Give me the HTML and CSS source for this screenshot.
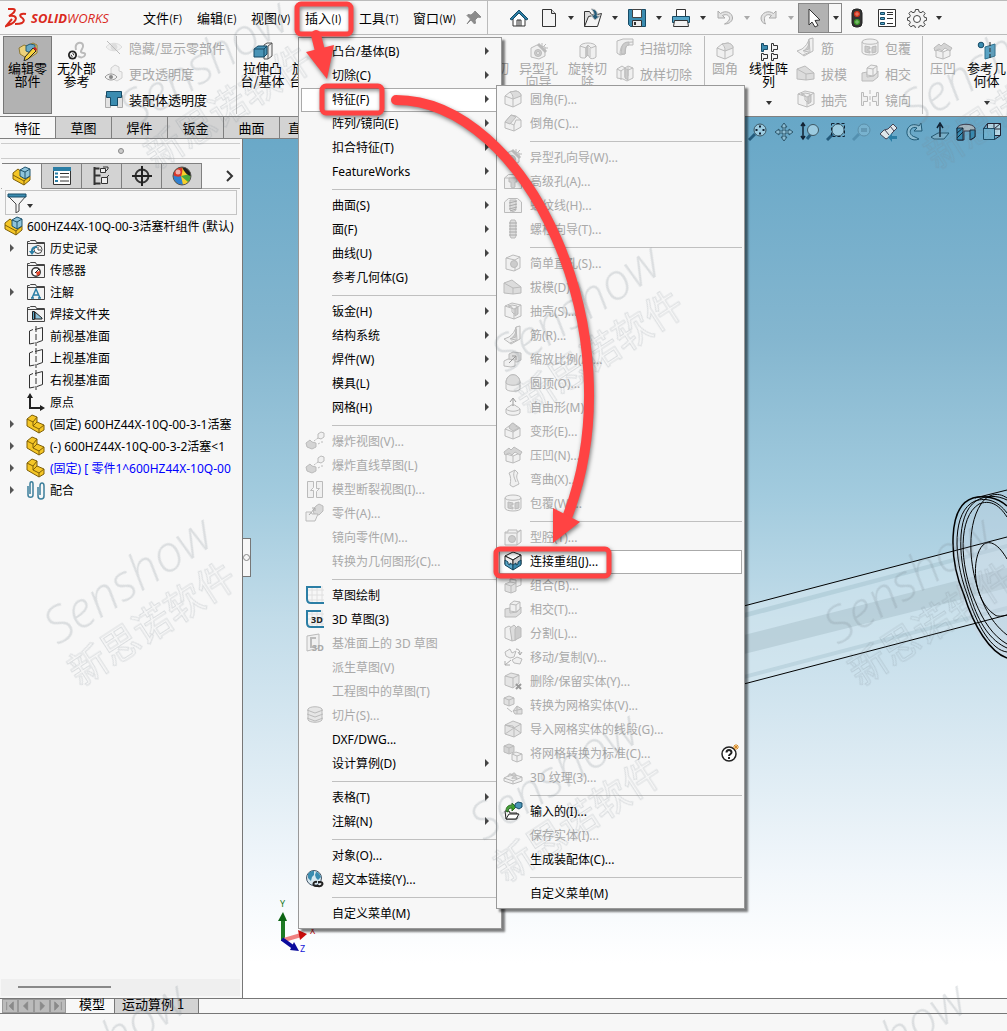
FILE: index.html
```html
<!DOCTYPE html>
<html lang="zh-CN">
<head>
    <meta charset="UTF-8">
    <meta name="viewport" content="width=device-width, initial-scale=1.0">
    <title>SOLIDWORKS</title>
    <link rel="stylesheet" href="styles.css">
</head>
<body>
    <!-- icon sprite -->
    <svg class="sprite" aria-hidden="true">
        <!-- title bar -->
        <symbol id="home" viewBox="0 0 20 20"><path d="M4 10v8h12v-8L10 4z" fill="#fff" stroke="#333"/><path d="M8 18v-6h4v6M10 12v6" fill="none" stroke="#333"/><path d="M1 11 10 2l9 9-2 1-7-7-7 7z" fill="#2b7ea5" stroke="#174b66"/></symbol>
        <symbol id="new" viewBox="0 0 20 20"><path d="M3.500 1.500h9l4 4v13h-13z" fill="#f4f4f4" stroke="#333"/><path d="M12.500 1.500v4h4" fill="#ddd" stroke="#333"/></symbol>
        <symbol id="open" viewBox="0 0 20 20"><path d="M1.500 18.500v-15h5l2 3h7v3" fill="#ddd" stroke="#333"/><path d="m1.500 18.500 4-10 13-3-4 13z" fill="#f4f4f4" stroke="#333"/><path d="M8 1c5 0 7 3 6 7h3l-5 4-4-5h3c0-3-1-4-3-6z" fill="#235a78"/></symbol>
        <symbol id="save" viewBox="0 0 20 20"><path d="M1.500 1.500h17v17h-15l-2-2z" fill="#3b8cb0" stroke="#174b66"/><path d="M5.500 1.500h9v8h-9z" fill="#fff" stroke="#444"/><path d="M5.500 12.500h9v6h-9z" fill="#eee" stroke="#333"/><path d="M8 14v3" stroke="#333" stroke-width="2"/></symbol>
        <symbol id="print" viewBox="0 0 20 20"><path d="M5.500 8V1.500h9V8" fill="#fff" stroke="#333"/><path d="M1.500 8.500h17v6h-17z" fill="#57a6c8" stroke="#174b66"/><path d="M3.500 12.500h13l1 6h-15z" fill="#f2f2f2" stroke="#333"/></symbol>
        <symbol id="undo" viewBox="0 0 20 20"><path d="M3 3v7h7L7.500 7.500c4-2 7 0 7 3 0 2-2 4-5 5.500 5 0 8-3 8-6C17.500 5 11 1.500 5.500 5.500z" fill="#e2e2e2" stroke="#aaa"/></symbol>
        <symbol id="redo" viewBox="0 0 20 20"><path d="M17 3v7h-7l2.500-2.500c-4-2-7 0-7 3 0 2 0 4 1 5.500-3-1-4.500-3-4.500-6C2.500 5 9 1.500 14.500 5.500z" fill="#e2e2e2" stroke="#aaa"/></symbol>
        <symbol id="cursor" viewBox="0 0 20 20"><path d="m5 1 11 11-5 .5 3 5-3 1.500-3-5-3 3z" fill="#fff" stroke="#333"/></symbol>
        <symbol id="traffic" viewBox="0 0 20 20"><rect x="5" y="1" width="10" height="18" rx="4" fill="#333" stroke="#222"/><circle cx="10" cy="6" r="3" fill="#d8351c" stroke="none"/><circle cx="10" cy="14" r="3" fill="#3c9a28" stroke="none"/><path d="M10 4v4M8 6h4M10 12v4M8 14h4" stroke="#fff" opacity=".4"/></symbol>
        <symbol id="options" viewBox="0 0 20 20"><path d="M1.500 1.500h17v17h-17z" fill="#fff" stroke="#333"/><path d="M3.500 4.500h4v2h-4zM3.500 9.500h4v2h-4zM3.500 14.500h4v2h-4z" fill="#57a6c8" stroke="#174b66"/><path d="M10 4.500h6M10 6.500h6M10 10.500h6M10 15.500h6" stroke="#333"/></symbol>
        <symbol id="gear" viewBox="0 0 20 20"><path d="m8.500 1.500h3l.5 2.300 2 .9 2.100-1.400 2 2.100-1.400 2.100.8 1.900 2.100.4v2.500l-2.100.5-.8 1.900 1.400 2-2 2.100-2.100-1.300-2 .8-.5 2.200h-3l-.5-2.200-2-.8-2.100 1.300-2-2.100 1.400-2-.8-1.900L.500 12.300V9.800l2-.4.8-1.900-1.400-2.100 2-2.100L6 4.700l2-.9z" fill="#f4f4f4" stroke="#444"/><circle cx="10" cy="11" r="3.500" fill="#fff" stroke="#444"/></symbol>
        <symbol id="pin" viewBox="0 0 20 20"><path d="m11 3 6 6-1.500.5-1.500-.5-3 3 .5 3-1 1-3.500-4-4 4 3.500-5L3 7.500l1-1 3 .5 3-2.500z" fill="#8b8b8b" stroke="#8b8b8b"/></symbol>

        <!-- ribbon -->
        <symbol id="editpart" viewBox="0 0 20 20"><path d="M1 7 6 4l3 1 6-3 4 2v8l-9 6-8-5z" fill="#ecd27b" stroke="#8f7a35"/><path d="m8 5 4-2 5 1v6l-4 2-5-2z" fill="#69a9c5" stroke="#245b75"/><path d="m7 16 8-9 3 3-8 8-4 2z" fill="#f7d13c" stroke="#222"/><path d="m15 7 2-1 2 2-1 2z" fill="#d42121" stroke="none"/></symbol>
        <symbol id="noext" viewBox="0 0 20 20"><path d="M9 9c-2-8 6-9 7-5s-3 5-2 7 5 0 4 3-5 3-7 1" fill="none" stroke="#bbb" stroke-width="2"/><circle cx="5.500" cy="14" r="4.500" fill="#222" stroke="none"/><circle cx="5.500" cy="14" r="2.300" fill="none" stroke="#fff"/><path d="m4 12 3 4" stroke="#fff" stroke-width="1.500"/></symbol>
        <symbol id="hide" viewBox="0 0 20 20"><path d="M2 10c4-5 12-5 16 0-4 5-12 5-16 0z" stroke="#ddd"/><circle cx="10" cy="10" r="3" fill="#ddd" stroke="#ddd"/><path d="m3 4 13 13" stroke="#bbb"/></symbol>
        <symbol id="transp" viewBox="0 0 20 20"><path d="m7 5 4-3 4 2v4l3 1v6l-5 3-6-3z" stroke="#d0d0d0"/><path d="M1 14c3-4 9-4 12 0-3 4-9 4-12 0z" stroke="#999"/><circle cx="7" cy="14" r="2" fill="#888" stroke="none"/></symbol>
        <symbol id="asmtransp" viewBox="0 0 20 20"><path d="M1.500 6.500h5v12h-5zM13.500 6.500h5v12h-5z" fill="#e2e2e2" stroke="#aaa"/><path d="M2.500 2.500h15v6h-4v8h-7v-8h-4z" fill="#3b8cb0" stroke="#174b66"/></symbol>
        <symbol id="extrude" viewBox="0 0 20 20"><path d="m11 4 3-2h5v13l-4 3h-4z" fill="#eee" stroke="#555"/><path d="M15 5v13M15 5l4-3" stroke="#555"/><path d="m1 8 4-3h9v8l-3 3H1z" fill="#4a94b6" stroke="#174b66"/><path d="M1 8h10v8M11 8l3-3" fill="none" stroke="#174b66"/></symbol>
        <symbol id="revcut" viewBox="0 0 20 20"><path d="M2 5c2-4 14-4 16 0v11c-2 2-5 2-6 1l-2-3-3 3c-2 0-4 0-5-1z"/><path d="M2 5l6 2 2-3 3 3 5-2M8 7v9M12 7v9" fill="none"/><path d="m8 7 2-3v10l-2 2z" fill="#c8c8c8"/></symbol>
        <symbol id="sweepcut" viewBox="0 0 20 20"><path d="M2 4 8 2h10v6h-4c-3 0-4 2-4 9l-5 1-3-2z"/><path d="M5 18c0-9 3-13 13-13M8 8l3 1-1 8" fill="none"/><path d="M7 9c1-3 4-4 7-4v3c-3 0-4 2-4 9H6z" fill="#ccc"/></symbol>
        <symbol id="loftcut" viewBox="0 0 20 20"><path d="m2 6 5-3 3 2 3-2 5 2v10l-6 3-4-2-6-1z"/><path d="M6 8v9M2 6l4 2 4-3v9l3-1V4M13 7l5-2" fill="none"/><path d="m10 5 3 2v10l-3-2z" fill="#ccc"/></symbol>
        <symbol id="linpat" viewBox="0 0 20 20"><path d="M2.500 2.500h2v2h4v4h-4v2h-2z" fill="#3b8cb0" stroke="#174b66"/><path d="M12.500 2.500h2v2h4v4h-4v2h-2zM2.500 12.500h2v1h4v4h-4v2h-2zM12.500 12.500h2v1h4v4h-4v2h-2z" fill="#f4f4f4" stroke="#333"/></symbol>
        <symbol id="mirror" viewBox="0 0 20 20"><path d="M1.500 3.500h2v4h4v5h-4v4h-2zM18.500 3.500h-2v4h-4v5h4v4h2z"/><path d="M10 1v18" stroke-dasharray="4 2"/></symbol>
        <symbol id="refgeom" viewBox="0 0 20 20"><circle cx="4" cy="4" r="2.800" fill="#3b8cb0" stroke="#174b66"/><path d="m8 6 10-3v12L8 18z" fill="#5aa3c4" stroke="#2d718f"/><path d="M13 1v18" stroke="#222" stroke-dasharray="4 2"/></symbol>

        <!-- features -->
        <symbol id="fillet" viewBox="0 0 20 20"><path d="M2 7 7 3l6-1c4 1 5 3 5 5v7l-8 4-8-3z"/><path d="m2 7 8 3v8" fill="none"/><path d="m7 3 6-1c4 1 5 3 5 5l-8 3c0-4-1-5-3-7z" fill="#dcdcdc"/></symbol>
        <symbol id="chamfer" viewBox="0 0 20 20"><path d="m2 9 6-7 5 1 5 4v7l-7 4-9-3z"/><path d="m2 9 4 1 5 2v6M11 12l2-5 5 0" fill="none"/><path d="m2 9 6-7 5 2-6 7z" fill="#d8d8d8"/></symbol>
        <symbol id="holewiz" viewBox="0 0 20 20"><path d="m2 7 6-3 8 2v9l-6 3-8-2z"/><circle cx="9" cy="12" r="3.500" fill="#ccc"/><circle cx="9" cy="12" r="1.500"/><path d="m9 3 8 8" stroke-width="3" stroke="#bbb"/><path d="M13 2v3M17 3l-2 2M19 7h-3" /></symbol>
        <symbol id="advhole" viewBox="0 0 20 20"><path d="m1.500 7 4-3.500h9l4 3.500v10.500h-17z"/><path d="M1.500 7h17" /><path d="M6 7h8v4h-2v5l-2 1-2-1v-5H6z" fill="#d0d0d0"/></symbol>
        <symbol id="thread" viewBox="0 0 20 20"><path d="m1.500 7 4-3.500h9l4 3.500v10.500h-17z"/><path d="M7 5h6v10l-3 2-3-2z" fill="#ddd"/><path d="m6 8 8-2M6 11l8-2M6 14l8-2M7 16l6-2" stroke="#aaa"/></symbol>
        <symbol id="stud" viewBox="0 0 20 20"><path d="m8 1h4l1 2v14l-1 2H8l-1-2V3z" fill="#ddd"/><path d="M6 4h8M6 7h8M6 10h8M6 13h8M6 16h8" stroke="#aaa"/></symbol>
        <symbol id="simhole" viewBox="0 0 20 20"><path d="m3 5 7-3 7 2v11l-6 3-8-2z"/><path d="m3 5 9 2 5-3M12 7v11" fill="none"/><circle cx="11" cy="11" r="3.500" fill="#ccc"/></symbol>
        <symbol id="draft" viewBox="0 0 20 20"><path d="m1 6 8-3 9 7v6l-8 1-9-1z" fill="#dcdcdc"/><path d="m1 6 9 5v6M10 11l8-1" fill="none"/></symbol>
        <symbol id="shell" viewBox="0 0 20 20"><path d="m2 5 7-3 9 2v11l-7 3-9-3z"/><path d="m2 5 9 3v10M11 8l7-4M5 5l4-1 5 1v7l-3 1-2-2V6z" fill="none"/><path d="M12 8l3-2v7l-3 2z" fill="#ccc"/></symbol>
        <symbol id="rib" viewBox="0 0 20 20"><path d="m1 14 5-2c4-3 6-6 7-10l4-1v13l-9 5z"/><path d="M7 14c4-2 6-6 6-10v8z" fill="#ccc"/><path d="m13 2 1 13-7 3M8 15l5-1" fill="none"/></symbol>
        <symbol id="scale" viewBox="0 0 20 20"><path d="m6 5 4-2 8 1v7l-4 2-8-1z" fill="#ddd"/><path d="m1 12 4-2 7 1v6l-4 1-7-1z"/><path d="m6 14 7-7M9 7h4v4" stroke="#999" fill="none"/></symbol>
        <symbol id="dome" viewBox="0 0 20 20"><path d="M3 10c0-11 14-11 14 0v6c-2 3-12 3-14 0z"/><path d="M3 10c0-11 14-11 14 0-2 3-12 3-14 0z" fill="#dcdcdc"/></symbol>
        <symbol id="freeform" viewBox="0 0 20 20"><path d="M3 12c2-3 4-2 5-4h4c1 2 3 1 5 4v4c-2 3-12 3-14 0z"/><path d="M3 12c3 3 11 3 14 0" fill="none"/><path d="M10 9V2M7 5l3-4 3 4" fill="none" stroke="#999"/></symbol>
        <symbol id="deform" viewBox="0 0 20 20"><path d="m2 8 8-6 7 5v8l-7 3-8-3z"/><path d="m2 8 8 3v7M10 11l7-4" fill="none"/><path d="M6 7c1-4 4-6 5-4s2 2 5 4l-6 3z" fill="#d0d0d0"/></symbol>
        <symbol id="indent" viewBox="0 0 20 20"><path d="m3 9 7 2 7-3v7l-7 3-7-2z"/><path d="m1 7 5-4 2 2 3-3 8 5-2 3-5-3-3 3-3-2-4 2z" fill="#d4d4d4"/><path d="M10 11v7" /></symbol>
        <symbol id="flex" viewBox="0 0 20 20"><path d="m6 4 6-3 3 3c-3 4 0 7 1 11l-6 3-3-2c1-5 1-8-1-12z"/><path d="M12 1c-3 5 0 9 1 12" fill="none"/></symbol>
        <symbol id="wrap" viewBox="0 0 20 20"><path d="M2 5c0-4 16-4 16 0v10c0 4-16 4-16 0z"/><path d="M2 5c0 3 16 3 16 0" fill="none"/><path d="M5 9l5 1v2H8v2h2v2l-5-1zM12 10l4-1v6l-4 1z" fill="#ccc"/></symbol>
        <symbol id="cavity" viewBox="0 0 20 20"><path d="M2 5h3V3h9v2l4-2v12l-4 3H2z"/><path d="M2 6h12v12M14 6l4-3" fill="none"/><circle cx="9" cy="12" r="3.500" fill="#ccc"/></symbol>
        <symbol id="join" viewBox="0 0 20 20"><path d="m2 5 8-4 8 3-8 5z" fill="#fff" stroke="#222"/><path d="m2 5 8 4v9l-8-5z" fill="#eee" stroke="#222"/><path d="m18 4-8 5v9l8-5z" fill="#ccc" stroke="#222"/><path d="m2 9 3 2v2l2 1v-2l3 2v5l-8-5z" fill="#59a6c8" stroke="#15455c"/><path d="m18 9-3 2v2l-2 1v-2l-3 2v5l8-5z" fill="#3b8cb0" stroke="#15455c"/></symbol>
        <symbol id="combine" viewBox="0 0 20 20"><path d="m7 4 5-2 6 1v7l-5 2-6-1z"/><path d="m2 9 5-2 6 1v8l-5 2-6-2z" fill="#e0e0e0"/><path d="m2 9 6 2v7M8 11l5-3M7 4l6 1v3" fill="none"/></symbol>
        <symbol id="intersect" viewBox="0 0 20 20"><path d="m2 10 5-1v5l7-1 4-5v6l-5 4H2z" fill="#ddd"/><path d="m7 5 4-3 6 1v7l-4 3-6-1z"/><path d="m7 5 6 1v7M13 6l4-3" fill="none"/></symbol>
        <symbol id="split" viewBox="0 0 20 20"><path d="m2 5 4-2 3 2v13l-7-3z"/><path d="m7 5 4-3 2 2v13l-4 1z" fill="#ddd"/><path d="m12 6 3-3 3 2v9l-6 3z" fill="#ccc"/></symbol>
        <symbol id="move" viewBox="0 0 20 20"><path d="m2 5 5-3 2 4 4-2-2 6-4 1-4-2zM9 13l5-3 5 2-2 5-6-1z"/><path d="M13 2c3 0 4 2 4 5M15 5l2 3 2-3M7 18H2v-4M2 18l6-5" fill="none" stroke="#aaa"/></symbol>
        <symbol id="delete" viewBox="0 0 20 20"><path d="m2 5 6-3 8 2v8l-6 5-8-3z" fill="#e4e4e4"/><path d="m2 5 8 2v10M10 7l6-3" fill="none"/><path d="m13 13 5 5m0-5-5 5" stroke="#999" stroke-width="2"/></symbol>
        <symbol id="convmesh" viewBox="0 0 20 20"><path d="m1 3 5-2 5 2v6l-5 2-5-2z" fill="#e0e0e0"/><path d="m1 3 5 2v6M6 5l5-2" fill="none"/><path d="m10 16 4-5 5 3v5h-7z" fill="#ddd"/><path d="m10 16 9-2M14 11v8M4 13l5 4" fill="none"/></symbol>
        <symbol id="impmesh" viewBox="0 0 20 20"><path d="m2 6 8-4 8 3v9l-7 4-9-3z" fill="#e4e4e4"/><path d="m2 6 9 3 7-4M11 9v9M2 15l9-6 7 5M2 6l8 1 1 2" fill="none"/></symbol>
        <symbol id="meshstd" viewBox="0 0 20 20"><path d="m1 3 5-2 5 2v6l-5 2-5-2z" fill="#d4d4d4"/><path d="m9 11 4-2 6 2v6l-5 2-5-2z"/><path d="m9 11 5 2v6M14 13l5-2M6 5v6M1 3l5 2 5-2" fill="none"/></symbol>
        <symbol id="texture" viewBox="0 0 20 20"><path d="m1 11 8-4 10 3v4l-9 3-9-3z"/><path d="m1 11 9 3 9-4M10 14v3" fill="none"/><path d="M5 10c0-4 4-4 4-1M9 9c0-4 4-4 4 0M9 12c0-4 5-4 5 0" fill="#ccc"/></symbol>
        <symbol id="import" viewBox="0 0 20 20"><path d="M2 10h4l1 2h7v6H3z" fill="#eee" stroke="#222"/><path d="m3 18 3-5h10l-3 5z" fill="#fff" stroke="#222"/><path d="M3 10c0-4 2-6 6-6V2l4 4-4 4V7C6 7 5 8 5 11z" fill="#3fa32c" stroke="#256b19"/><path d="m12 3 3-2 4 1v4l-3 2-4-2z" fill="#4a94b6" stroke="#174b66"/></symbol>
        <symbol id="help" viewBox="0 0 20 20"><circle cx="9" cy="11" r="7" fill="#fff" stroke="#222" stroke-width="1.500"/><path d="M6.500 9.500c0-3.500 5-3.500 5 0 0 1.500-2.500 2-2.500 3.500M9 14v2" fill="none" stroke="#222" stroke-width="2"/><path d="M16 1v6M13 4h6M14 2l4 4M18 2l-4 4" stroke="#d98a20"/></symbol>

        <!-- insert menu -->
        <symbol id="explode" viewBox="0 0 20 20"><path d="m1 12 4-3 2 2 4 1v4l-4 2-5-2z" fill="#d4d4d4"/><path d="m13 3 3-2 3 1v4l-3 2-3-1z"/><path d="m9 10 4-3M13 13l2-1M17 10v3" stroke-dasharray="2 1"/></symbol>
        <symbol id="break" viewBox="0 0 20 20"><path d="M2.500 2.500h6v6l-3 3h3v7h-6zM17.500 2.500h-6v7h3l-3 3v6h6z"/></symbol>
        <symbol id="inspart" viewBox="0 0 20 20"><path d="m8 7 3-4 3-2 4 2v5l-4 4-5-1z" fill="#d8d8d8"/><path d="M1 9h5l1 2h6l-3 7H1z"/><path d="m4 12 6-7M7 5h3v3" fill="none" stroke="#aaa"/></symbol>
        <symbol id="sketch" viewBox="0 0 20 20"><path d="M7 1v18M12 1v18M17 1v18M2 5h17M2 10h17M2 15h17" stroke="#e0e0e0"/><path d="M16 2H2v12c0 3 1 4 4 4h13" fill="none" stroke="#2b7ea5" stroke-width="2"/></symbol>
        <symbol id="plane3d" viewBox="0 0 20 20"><path d="M2 3 14 1v14L2 18z"/><path d="M11 5H6v9h5" fill="none" stroke="#bbb" stroke-width="2"/></symbol>
        <symbol id="slice" viewBox="0 0 20 20"><path d="M3 4c2-3 12-3 14 0v11c-2 3-12 3-14 0z" fill="#e6e6e6"/><path d="m2 5 8 3 8-3M2 9l8 3 8-3M2 13l8 3 8-3" fill="none"/></symbol>
        <symbol id="globe" viewBox="0 0 20 20"><circle cx="9" cy="9" r="7.500" fill="#d8e8f0" stroke="#456"/><path d="M3 5c2-3 4-3 6-3v4L7 8l-1 4-3-3zM11 3c2 0 4 2 5 5l-3 3-2-2-1-3z" fill="#3b8cb0" stroke="none"/><path d="M12 13c-4-1-5 4-1 4h3M13 17c5 1 6-4 2-4h-2" fill="none" stroke="#222" stroke-width="2"/></symbol>

        <!-- feature tree -->
        <symbol id="asm" viewBox="0 0 20 20"><path d="M1 10V7l5-4 4 3v3l4 3 4-2v4l-6 5L1 13z" fill="#f5c626" stroke="#7e5f08"/><path d="m1 9 11 6v4M12 15l6-5" fill="none" stroke="#7e5f08"/><path d="m8 4 5-3 5 2v7l-5 3-5-3z" fill="#8fc4dc" stroke="#1f526b"/><path d="m8 4 5 2v7M13 6l5-3" fill="none" stroke="#1f526b"/></symbol>
        <symbol id="part" viewBox="0 0 20 20"><path d="M1 12V5l5-4 5 2v5l7 3v5l-5 3z" fill="#f5c626" stroke="#7e5f08"/><path d="m1 5 6 3v4l6 3v4M7 8l4-5M7 12l4-4M13 15l5-4" fill="none" stroke="#7e5f08"/></symbol>
        <symbol id="folder" viewBox="0 0 20 20"><path d="M1.500 17.500v-14h2l1-1h5l1 2h8v13z" fill="#f2f2f2" stroke="#444"/><path d="M1.500 5.500h17" stroke="#444"/></symbol>
        <symbol id="history" viewBox="0 0 20 20"><use href="#folder"/><circle cx="12" cy="11.500" r="4" fill="#fff" stroke="#444"/><path d="M12 9v3h3" fill="none" stroke="#444"/><path d="M11 8c-5 0-6 3-6 5H3l3 4 3-4H7c0-2 1-3 4-3z" fill="#2b7ea5" stroke="none"/></symbol>
        <symbol id="sensor" viewBox="0 0 20 20"><use href="#folder"/><circle cx="10" cy="12" r="4.200" fill="#fff" stroke="#333" stroke-width="1.500"/><path d="m10 12 4-1v3l-3 2z" fill="#e2452a" stroke="none"/><path d="m9 13 4-4" stroke="#222"/></symbol>
        <symbol id="annot" viewBox="0 0 20 20"><use href="#folder"/><path d="m6 16 4-9 4 9M7.500 13h5M5 16h3M12 16h3" fill="none" stroke="#2b7ea5" stroke-width="1.500"/></symbol>
        <symbol id="weld" viewBox="0 0 20 20"><use href="#folder"/><path d="M9 8v7h7v-1z" fill="#8fc4dc" stroke="#222"/><path d="M6.500 7.500h2v8h-2z" fill="#57a6c8" stroke="#222"/></symbol>
        <symbol id="plane" viewBox="0 0 20 20"><path d="M7 3.500 3.500 5v13l5-1M11 16.500l5.500-2v-13L9 3.500" fill="none" stroke="#333"/><path d="M10 0v20" stroke="#333" stroke-dasharray="6 2"/></symbol>
        <symbol id="origin" viewBox="0 0 20 20"><path d="M4 4v12h12" fill="none" stroke="#222" stroke-width="2"/><path d="m1 6 3-5 3 5zM14 13l5 3-5 3z" fill="#222" stroke="none"/></symbol>
        <symbol id="mates" viewBox="0 0 20 20"><path d="M2 6v9c0 3 5 3 5 0V4c0-3-3-3-3 0v10M12 7v9c0 4 6 4 6 0V6c0-4-4-4-4 0v9" fill="none" stroke="#3d7f9c" stroke-width="1.500"/></symbol>
        <symbol id="funnel" viewBox="0 0 20 20"><path d="M1 3h18l-7 8v7l-3 2v-9z" fill="#f4f4f4" stroke="#444"/><path d="M1 1h18v3H1z" fill="#3b8cb0" stroke="#174b66"/></symbol>
        <symbol id="props" viewBox="0 0 20 20"><path d="M1.500 1.500h17v17h-17z" fill="#fff" stroke="#333"/><path d="M1 1h18v4H1z" fill="#2b7ea5" stroke="none"/><path d="M3 7.500h3M3 11h3M3 15h3" stroke="#2b7ea5" stroke-width="2"/><path d="M8 7.500h9M8 11h9M8 15h9" stroke="#333"/></symbol>
        <symbol id="config" viewBox="0 0 20 20"><path d="M2.500 1v18M2.500 2.500h5M2.500 9.500h6M2.500 17.500h6" fill="none" stroke="#333" stroke-width="2"/><path d="M8.500 2.500h5v4h-5zM9.500 11.500h6v6h-6z" fill="#eee" stroke="#333"/><path d="m13 6 3-3v-2h-5M15 11l2-2" fill="none" stroke="#333"/></symbol>
        <symbol id="target" viewBox="0 0 20 20"><circle cx="10" cy="10" r="6.500" fill="none" stroke="#333" stroke-width="2"/><path d="M10 0v20M0 10h20" stroke="#222" stroke-width="2"/></symbol>
        <symbol id="ball" viewBox="0 0 20 20"><g stroke="none"><circle cx="10" cy="10" r="9" fill="#f6cf2b"/><path d="M1 11a9 9 0 0 1 9-10c1 3 0 7-1 10z" fill="#d8372a"/><path d="M1 9c3 2 6 2 8 1l2 9C5 19 1 15 1 9z" fill="#2f7fd0"/><path d="m9 10 9-2c2 3 0 6-2 8z" fill="#4aaa3c"/><path d="M10 1c5 0 9 4 9 9-3 0-7-4-9-9z" fill="#222"/><circle cx="6" cy="6" r="2.500" fill="#fff" opacity=".6"/></g><circle cx="10" cy="10" r="9" fill="none" stroke="#555"/></symbol>

        <!-- heads-up view -->
        <symbol id="lens" viewBox="0 0 20 20"><path d="m1 18 6-6" stroke="#245b7c" stroke-width="3"/><circle cx="12" cy="8" r="6" fill="#9ccbe0" stroke="#3d5763"/></symbol>
        <symbol id="zoomfit" viewBox="0 0 20 20"><use href="#lens"/><path d="M12 3.500v2M12 10.500v2M7.500 8h2M14.500 8h2" stroke="#123" stroke-width="2"/></symbol>
        <symbol id="pan" viewBox="0 0 20 20"><path d="m10 1 3 4h-2v4h4V7l4 3-4 3v-2h-4v4h2l-3 4-3-4h2v-4H5v2l-4-3 4-3v2h4V5H7z" fill="#8dbdd3" stroke="#2c566b"/></symbol>
        <symbol id="zoominout" viewBox="0 0 20 20"><path d="m7 17 4-5" stroke="#245b7c" stroke-width="3"/><circle cx="13" cy="8" r="5.500" fill="#9ccbe0" stroke="#3d5763"/><path d="M3 2v14M1 4l2-3 2 3M1 14l2 3 2-3" fill="none" stroke="#123" stroke-width="1.500"/></symbol>
        <symbol id="zoomarea" viewBox="0 0 20 20"><use href="#lens"/><path d="M5.500 1.500h13v13h-13z" fill="none" stroke="#123" stroke-dasharray="3 2"/></symbol>
        <symbol id="zoomsel" viewBox="0 0 20 20"><g opacity=".3"><use href="#lens"/><path d="M9 7h6M9 9h6" stroke="#123"/></g></symbol>
        <symbol id="prev" viewBox="0 0 20 20"><path d="m2 12 4-4 4-1 5-5 4 4-5 5-1 3-5 3z" fill="#dfe6ea" stroke="#445"/><path d="m7 8 4 5M12 4l4 5" stroke="#445"/><path d="m10 15 4-4v3h5v3h-5v3z" fill="#2b7ea5" stroke="none"/></symbol>
        <symbol id="rotate" viewBox="0 0 20 20"><path d="M15 17c-7 3-13-2-12-8C4 3 10 1 15 4l2-3 1 8h-8l3-3C6 3 3 13 11 15z" fill="#8dbdd3" stroke="#1f5975"/></symbol>
        <symbol id="normal" viewBox="0 0 20 20"><path d="m1 15 7-4h11l-5 6H4z" fill="#7ab2cc" stroke="#24566e"/><path d="M10 15V3M7 6l3-5 3 5" fill="none" stroke="#123" stroke-width="1.500"/></symbol>
        <symbol id="section" viewBox="0 0 20 20"><path d="M1 6c2-5 16-5 18 0v9l-4 3V9H8v9H2z" fill="#a5b7c0" stroke="#334"/><path d="M1 6h6v12H1z" fill="#3689b0" stroke="#123"/><path d="m1 11 6-5M1 16l6-6" stroke="#123"/><path d="M14 8h5v7l-5 3z" fill="#3689b0" stroke="#123"/></symbol>
        <symbol id="orient" viewBox="0 0 20 20"><path d="M5.500 1.500h13v12h-13z" fill="#b6d7e6" stroke="#223"/><path d="M12 2v11M6 7h12" stroke="#223"/><path d="M1.500 6.500h11v11h-11z" fill="#6fb1cf" stroke="#174b66"/><path d="m1.500 6.500 4-5M12.500 6.500l6-5M12.500 17.500l6-4" stroke="#223"/></symbol>
    </svg>

    <header class="titlebar">
        <div class="logo">
            <svg class="logo-mark" viewBox="0 0 22 21"><path d="M3 2h5c3 0 2 3-1 5L4 9c8-1 8 3 5 6-2 2-5 3-8 4l6-7M21 7c-5-1-7 1-5 3 3 2 4 4 1 6-2 1-4 1-7 1"/></svg>
            <span><b>SOLID</b>WORKS</span>
        </div>
        <nav class="menubar">
            <button>文件<small>(F)</small></button>
            <button>编辑<small>(E)</small></button>
            <button>视图<small>(V)</small></button>
            <button class="open">插入<small>(I)</small></button>
            <button>工具<small>(T)</small></button>
            <button>窗口<small>(W)</small></button>
        </nav>
        <button class="pin" aria-label="固定"><svg class="icon"><use href="#pin"/></svg></button>
        <div class="quick">
            <button aria-label="主页"><svg class="icon"><use href="#home"/></svg></button>
            <button class="split" aria-label="新建"><svg class="icon"><use href="#new"/></svg><i class="caret"></i></button>
            <button class="split" aria-label="打开"><svg class="icon"><use href="#open"/></svg><i class="caret"></i></button>
            <button class="split" aria-label="保存"><svg class="icon"><use href="#save"/></svg><i class="caret"></i></button>
            <button class="split" aria-label="打印"><svg class="icon"><use href="#print"/></svg><i class="caret"></i></button>
            <button class="split off" aria-label="撤消"><svg class="icon"><use href="#undo"/></svg><i class="caret"></i></button>
            <button class="split off" aria-label="重做"><svg class="icon"><use href="#redo"/></svg><i class="caret"></i></button>
            <button class="select" aria-label="选择"><span><svg class="icon"><use href="#cursor"/></svg></span><i class="caret"></i></button>
            <button aria-label="重建"><svg class="icon"><use href="#traffic"/></svg></button>
            <button aria-label="文件属性"><svg class="icon"><use href="#options"/></svg></button>
            <button class="split" aria-label="选项"><svg class="icon"><use href="#gear"/></svg><i class="caret"></i></button>
        </div>
    </header>

    <section class="ribbon">
        <button class="big pressed"><svg class="icon"><use href="#editpart"/></svg>编辑零<br>部件</button>
        <button class="big"><svg class="icon"><use href="#noext"/></svg>无外部<br>参考</button>
        <div class="stack wide">
            <button class="off"><svg class="icon"><use href="#hide"/></svg>隐藏/显示零部件</button>
            <button class="off"><svg class="icon"><use href="#transp"/></svg>更改透明度</button>
            <button><svg class="icon"><use href="#asmtransp"/></svg>装配体透明度</button>
        </div>
        <div class="rule"></div>
        <button class="big"><svg class="icon"><use href="#extrude"/></svg>拉伸凸<br>台/基体</button>
        <button class="big"><svg class="icon"><use href="#extrude"/></svg>旋转凸<br>台/基体</button>
        <div class="under-menu"></div>
        <button class="big off"><svg class="icon"><use href="#shell"/></svg>拉伸切<br>除</button>
        <button class="big off"><svg class="icon"><use href="#holewiz"/></svg>异型孔<br>向导</button>
        <button class="big off"><svg class="icon"><use href="#revcut"/></svg>旋转切<br>除</button>
        <div class="stack cuts">
            <button class="off"><svg class="icon"><use href="#sweepcut"/></svg>扫描切除</button>
            <button class="off"><svg class="icon"><use href="#loftcut"/></svg>放样切除</button>
        </div>
        <div class="rule"></div>
        <button class="big slim off"><svg class="icon"><use href="#fillet"/></svg>圆角</button>
        <button class="big"><svg class="icon"><use href="#linpat"/></svg>线性阵<br>列<i class="caret"></i></button>
        <div class="stack">
            <button class="off"><svg class="icon"><use href="#rib"/></svg>筋</button>
            <button class="off"><svg class="icon"><use href="#draft"/></svg>拔模</button>
            <button class="off"><svg class="icon"><use href="#shell"/></svg>抽壳</button>
        </div>
        <div class="stack">
            <button class="off"><svg class="icon"><use href="#wrap"/></svg>包覆</button>
            <button class="off"><svg class="icon"><use href="#intersect"/></svg>相交</button>
            <button class="off"><svg class="icon"><use href="#mirror"/></svg>镜向</button>
        </div>
        <div class="rule"></div>
        <button class="big slim off"><svg class="icon"><use href="#indent"/></svg>压凹</button>
        <button class="big"><svg class="icon"><use href="#refgeom"/></svg>参考几<br>何体<i class="caret"></i></button>
    </section>

    <main class="workspace">
        <div class="tabs">
            <button class="tab active">特征</button>
            <button class="tab">草图</button>
            <button class="tab">焊件</button>
            <button class="tab">钣金</button>
            <button class="tab">曲面</button>
            <button class="tab last">直接编辑</button>
        </div>

        <aside class="panel">
            <div class="grip"><span></span></div>
            <div class="panel-tabs">
                <button class="active" aria-label="设计树"><svg class="icon"><use href="#asm"/></svg></button>
                <button aria-label="属性"><svg class="icon"><use href="#props"/></svg></button>
                <button aria-label="配置"><svg class="icon"><use href="#config"/></svg></button>
                <button aria-label="尺寸"><svg class="icon"><use href="#target"/></svg></button>
                <button aria-label="外观"><svg class="icon"><use href="#ball"/></svg></button>
                <button class="more" aria-label="更多"><svg viewBox="0 0 8 12"><path d="m1 1 5 5-5 5"/></svg></button>
            </div>
            <button class="filter" aria-label="过滤"><svg class="icon"><use href="#funnel"/></svg><i class="caret"></i></button>
            <ul class="tree">
                <li class="root"><svg class="icon"><use href="#asm"/></svg>600HZ44X-10Q-00-3活塞杆组件 (默认)</li>
                <li class="node"><svg class="icon"><use href="#history"/></svg>历史记录</li>
                <li><svg class="icon"><use href="#sensor"/></svg>传感器</li>
                <li class="node"><svg class="icon"><use href="#annot"/></svg>注解</li>
                <li><svg class="icon"><use href="#weld"/></svg>焊接文件夹</li>
                <li><svg class="icon"><use href="#plane"/></svg>前视基准面</li>
                <li><svg class="icon"><use href="#plane"/></svg>上视基准面</li>
                <li><svg class="icon"><use href="#plane"/></svg>右视基准面</li>
                <li><svg class="icon"><use href="#origin"/></svg>原点</li>
                <li class="node"><svg class="icon"><use href="#part"/></svg>(固定) 600HZ44X-10Q-00-3-1活塞</li>
                <li class="node"><svg class="icon"><use href="#part"/></svg>(-) 600HZ44X-10Q-00-3-2活塞&lt;1</li>
                <li class="node editing"><svg class="icon"><use href="#part"/></svg>(固定) [ 零件1^600HZ44X-10Q-00</li>
                <li class="node"><svg class="icon"><use href="#mates"/></svg>配合</li>
            </ul>
            <div class="scroll"><span></span></div>
        </aside>

        <section class="viewport">
            <div class="headsup">
                <button aria-label="整屏显示"><svg class="icon"><use href="#zoomfit"/></svg></button>
                <button aria-label="平移"><svg class="icon"><use href="#pan"/></svg></button>
                <button aria-label="放大缩小"><svg class="icon"><use href="#zoominout"/></svg></button>
                <button aria-label="局部放大"><svg class="icon"><use href="#zoomarea"/></svg></button>
                <button aria-label="放大所选"><svg class="icon"><use href="#zoomsel"/></svg></button>
                <button aria-label="上一视图"><svg class="icon"><use href="#prev"/></svg></button>
                <button aria-label="旋转"><svg class="icon"><use href="#rotate"/></svg></button>
                <button aria-label="正视于"><svg class="icon"><use href="#normal"/></svg></button>
                <button aria-label="剖面视图"><svg class="icon"><use href="#section"/></svg></button>
                <button aria-label="视图定向"><svg class="icon"><use href="#orient"/></svg></button>
            </div>
            <button class="handle" aria-label="折叠面板"></button>
            <svg class="model" viewBox="740 480 267 220">
                <path d="M740 607 1007 537v79L740 685z" fill="#d6e7f0" opacity=".5"/>
                <path d="M740 614 1007 544v4L740 619z" fill="#a9c6d2" opacity=".6"/>
                <path d="M740 636 1007 568v20L740 655z" fill="#a8bfca" opacity=".5"/>
                <path d="M740 676 1007 606v4L740 680z" fill="#a9c6d2" opacity=".5"/>
                <path d="M1007 492C960 485 945 530 957 586c10 40 28 66 50 72z" fill="#ccd5e0" opacity=".3"/>
                <g fill="none" stroke="#000">
                    <path d="M740 607 1007 537M740 685 1007 615M975 498l32-8"/>
                    <path d="M1007 506c-10-9-24-11-34-8-26 8-24 62-9 97 10 32 26 57 43 63" stroke-width="1.500"/>
                    <path d="M1007 513c-9-12-20-16-32-12-23 10-22 56-8 93 11 34 25 56 40 58"/>
                    <path d="M1007 500c-10-5-22-5-31 1-21 14-18 62-5 97 8 26 20 43 36 50"/>
                    <path d="M1007 517c-9-14-18-17-28-13-21 13-20 60-4 97 8 20 18 35 32 43"/>
                    <path d="M1007 498c-10-7-20-3-26 6-16 24-12 70 4 103 6 12 12 20 22 28"/>
                    <path d="M1007 559c-8-14-17-20-24-14-12 12-11 55 12 70 3 2 8 1 12 0"/>
                </g>
            </svg>
            <svg class="triad" viewBox="275 896 50 60">
                <path d="M283 941v-22" stroke="#1e7a24" stroke-width="4"/><path d="m278 921 5-9 4 9z" fill="#0b6413"/>
                <path d="m284 940 17-5" stroke="#f08080" stroke-width="4"/><path d="m298 930 9 4-7 6z" fill="#c90c0c"/>
                <path d="m282 939 11 8" stroke="#0b0b9c" stroke-width="4"/><path d="m294 942 5 9-9-1z" fill="#0b0b9c"/>
                <text x="280" y="907" fill="#1e7a24">Y</text><text x="310" y="934" fill="#c90c0c">X</text><text x="300" y="952" fill="#1717d8">Z</text>
            </svg>
        </section>
    </main>

    <footer class="bottom">
        <div class="sheet-tabs">
            <button class="step" aria-label="第一个"><svg viewBox="0 0 12 12"><path d="M2 1v10M10 1 5 6l5 5z"/></svg></button>
            <button class="step" aria-label="上一个"><svg viewBox="0 0 12 12"><path d="M8 1 3 6l5 5z"/></svg></button>
            <button class="step" aria-label="下一个"><svg viewBox="0 0 12 12"><path d="m4 1 5 5-5 5z"/></svg></button>
            <button class="step" aria-label="最后一个"><svg viewBox="0 0 12 12"><path d="M10 1v10M2 1l5 5-5 5z"/></svg></button>
            <button class="sheet active">模型</button>
            <button class="sheet">运动算例 1</button>
        </div>
        <div class="status"></div>
    </footer>

    <!-- Insert menu -->
    <div class="menu menu-insert" role="menu">
        <button class="item sub">凸台/基体(B)</button>
        <button class="item sub">切除(C)</button>
        <button class="item sub hot">特征(F)</button>
        <button class="item sub">阵列/镜向(E)</button>
        <button class="item sub">扣合特征(T)</button>
        <button class="item sub">FeatureWorks</button>
        <hr>
        <button class="item sub">曲面(S)</button>
        <button class="item sub">面(F)</button>
        <button class="item sub">曲线(U)</button>
        <button class="item sub">参考几何体(G)</button>
        <hr>
        <button class="item sub">钣金(H)</button>
        <button class="item sub">结构系统</button>
        <button class="item sub">焊件(W)</button>
        <button class="item sub">模具(L)</button>
        <button class="item sub">网格(H)</button>
        <hr>
        <button class="item off"><svg class="icon"><use href="#explode"/></svg>爆炸视图(V)...</button>
        <button class="item off"><svg class="icon"><use href="#explode"/></svg>爆炸直线草图(L)</button>
        <button class="item off"><svg class="icon"><use href="#break"/></svg>模型断裂视图(I)...</button>
        <button class="item off"><svg class="icon"><use href="#inspart"/></svg>零件(A)...</button>
        <button class="item off">镜向零件(M)...</button>
        <button class="item off">转换为几何图形(C)...</button>
        <hr>
        <button class="item"><svg class="icon"><use href="#sketch"/></svg>草图绘制</button>
        <button class="item"><svg class="icon"><use href="#sketch"/><text x="6" y="14">3D</text></svg>3D 草图(3)</button>
        <button class="item off"><svg class="icon"><use href="#plane3d"/><text x="7" y="18">3D</text></svg>基准面上的 3D 草图</button>
        <button class="item off">派生草图(V)</button>
        <button class="item off">工程图中的草图(T)</button>
        <button class="item off"><svg class="icon"><use href="#slice"/></svg>切片(S)...</button>
        <button class="item">DXF/DWG...</button>
        <button class="item sub">设计算例(D)</button>
        <hr>
        <button class="item sub">表格(T)</button>
        <button class="item sub">注解(N)</button>
        <hr>
        <button class="item">对象(O)...</button>
        <button class="item"><svg class="icon"><use href="#globe"/></svg>超文本链接(Y)...</button>
        <hr>
        <button class="item">自定义菜单(M)</button>
    </div>

    <!-- Insert > Features -->
    <div class="menu menu-features" role="menu">
        <button class="item off"><svg class="icon"><use href="#fillet"/></svg>圆角(F)...</button>
        <button class="item off"><svg class="icon"><use href="#chamfer"/></svg>倒角(C)...</button>
        <hr>
        <button class="item off"><svg class="icon"><use href="#holewiz"/></svg>异型孔向导(W)...</button>
        <button class="item off"><svg class="icon"><use href="#advhole"/></svg>高级孔(A)...</button>
        <button class="item off"><svg class="icon"><use href="#thread"/></svg>螺纹线(H)...</button>
        <button class="item off"><svg class="icon"><use href="#stud"/></svg>螺柱向导(T)...</button>
        <hr>
        <button class="item off"><svg class="icon"><use href="#simhole"/></svg>简单直孔(S)...</button>
        <button class="item off"><svg class="icon"><use href="#draft"/></svg>拔模(D)...</button>
        <button class="item off"><svg class="icon"><use href="#shell"/></svg>抽壳(S)...</button>
        <button class="item off"><svg class="icon"><use href="#rib"/></svg>筋(R)...</button>
        <button class="item off"><svg class="icon"><use href="#scale"/></svg>缩放比例(A)...</button>
        <button class="item off"><svg class="icon"><use href="#dome"/></svg>圆顶(O)...</button>
        <button class="item off"><svg class="icon"><use href="#freeform"/></svg>自由形(M)...</button>
        <button class="item off"><svg class="icon"><use href="#deform"/></svg>变形(E)...</button>
        <button class="item off"><svg class="icon"><use href="#indent"/></svg>压凹(N)...</button>
        <button class="item off"><svg class="icon"><use href="#flex"/></svg>弯曲(X)...</button>
        <button class="item off"><svg class="icon"><use href="#wrap"/></svg>包覆(W)...</button>
        <hr>
        <button class="item off"><svg class="icon"><use href="#cavity"/></svg>型腔(T)...</button>
        <button class="item hot"><svg class="icon"><use href="#join"/></svg>连接重组(J)...</button>
        <button class="item off"><svg class="icon"><use href="#combine"/></svg>组合(B)...</button>
        <button class="item off"><svg class="icon"><use href="#intersect"/></svg>相交(T)...</button>
        <button class="item off"><svg class="icon"><use href="#split"/></svg>分割(L)...</button>
        <button class="item off"><svg class="icon"><use href="#move"/></svg>移动/复制(V)...</button>
        <button class="item off"><svg class="icon"><use href="#delete"/></svg>删除/保留实体(Y)...</button>
        <button class="item off"><svg class="icon"><use href="#convmesh"/></svg>转换为网格实体(V)...</button>
        <button class="item off"><svg class="icon"><use href="#impmesh"/></svg>导入网格实体的线段(G)...</button>
        <button class="item off"><svg class="icon"><use href="#meshstd"/></svg>将网格转换为标准(C)...<svg class="icon tip"><use href="#help"/></svg></button>
        <button class="item off"><svg class="icon"><use href="#texture"/></svg>3D 纹理(3)...</button>
        <hr>
        <button class="item"><svg class="icon"><use href="#import"/></svg>输入的(I)...</button>
        <button class="item off">保存实体(I)...</button>
        <button class="item">生成装配体(C)...</button>
        <hr>
        <button class="item">自定义菜单(M)</button>
    </div>

    <!-- watermark and callouts -->
    <svg class="overlay" width="1007" height="1031" aria-hidden="true">
        <g class="watermark">
            <g transform="translate(58 646) rotate(-33)"><text class="brand">Senshow</text><text x="-4" y="46">新思诺软件</text></g>
            <g transform="translate(506 374) rotate(-33)"><text class="brand">Senshow</text><text x="-4" y="46">新思诺软件</text></g>
            <g transform="translate(838 646) rotate(-33)"><text class="brand">Senshow</text><text x="-4" y="46">新思诺软件</text></g>
            <g transform="translate(484 842) rotate(-33)"><text class="brand">Senshow</text><text x="-4" y="46">新思诺软件</text></g>
            <g transform="translate(134 129) rotate(-33)"><text class="brand">Senshow</text><text x="-4" y="46">新思诺软件</text></g>
            <g transform="translate(914 129) rotate(-33)"><text class="brand">Senshow</text><text x="-4" y="46">新思诺软件</text></g>
            <g transform="translate(32 1112) rotate(-33)"><text class="brand">Senshow</text></g>
            <g transform="translate(812 1112) rotate(-33)"><text class="brand">Senshow</text></g>
        </g>
        <g class="callout">
            <rect x="297" y="4" width="54" height="30" rx="4"/>
            <rect x="322" y="86" width="60" height="27" rx="4"/>
            <rect x="496" y="549" width="113" height="27" rx="4"/>
            <path d="m316 35 5 20M396 100C525 100 637 330 568 515"/>
            <path class="head" d="m306 52 28-7-7 34zM553 508l27 14-27 21z"/>
        </g>
    </svg>
</body>
</html>
```

FILE: styles.css
```css
* {
    box-sizing: border-box;
}
body {
    margin: 0;
    height: 100vh;
    display: flex;
    flex-direction: column;
    overflow: hidden;
    position: relative;
    background-color: #f7f7f7;
    color: #000;
    font-family: "Noto Sans CJK SC", sans-serif;
    font-size: 13px;
}
button {
    margin: 0;
    padding: 0;
    border: none;
    background: none;
    color: inherit;
    font: inherit;
    white-space: nowrap;
}
.sprite {
    position: absolute;
    width: 0;
    height: 0;
}
.icon {
    flex: none;
    width: 20px;
    height: 20px;
    fill: #f0f0f0;
    stroke: #bbb;
}
.caret {
    flex: none;
    border: 3px solid transparent;
    border-top: 4px solid #333;
    border-bottom: none;
}
.off {
    color: #a9a9a9;
}
.off .caret {
    border-top-color: #aaa;
}

/* title bar */
.titlebar {
    flex: none;
    display: flex;
    align-items: stretch;
    height: 35px;
    border-top: 1px solid #bbb;
    border-bottom: 1px solid #bbb;
}
.logo {
    display: flex;
    align-items: center;
    gap: 4px;
    width: 135px;
    padding-left: 5px;
    color: #da291c;
    font-family: "Open Sans", sans-serif;
    font-style: italic;
    font-size: 13px;
}
.logo-mark {
    width: 22px;
    height: 21px;
    fill: none;
    stroke: #da291c;
    stroke-width: 2;
}
.menubar {
    display: flex;
}
.menubar button {
    width: 54px;
    padding-left: 8px;
    text-align: left;
}
.menubar button:last-child {
    width: 57px;
}
.menubar .open {
    background-color: #fff;
}
.menubar small {
    font-size: 11px;
}
.pin {
    display: flex;
    align-items: center;
    justify-content: flex-end;
    width: 26px;
    padding-right: 3px;
    border-right: 1px solid #bbb;
}
.quick {
    display: flex;
    align-items: center;
    padding-left: 16px;
}
.quick button {
    display: flex;
    align-items: center;
    width: 30px;
    padding: 0 5px;
}
.quick .split {
    width: 44px;
    gap: 9px;
}
.quick .select {
    width: 44px;
    height: 30px;
    padding: 0;
    gap: 4px;
    border: 1px solid #888;
}
.select span {
    display: flex;
    align-items: center;
    justify-content: center;
    width: 30px;
    height: 28px;
    background-color: #b2b2b2;
    border-right: 1px solid #888;
}

/* ribbon */
.ribbon {
    flex: none;
    display: flex;
    height: 82px;
    padding-left: 3px;
    border-bottom: 1px solid #808080;
}
.big {
    flex: none;
    display: flex;
    flex-direction: column;
    align-items: center;
    width: 49px;
    height: 78px;
    margin-top: 1px;
    padding-top: 5px;
    line-height: 13px;
}
.big .caret {
    margin-top: 14px;
}
.slim {
    width: 38px;
}
.pressed {
    background-color: #b2b2b2;
    border: 1px solid #777;
    padding-top: 4px;
}
.stack {
    flex: none;
    display: flex;
    flex-direction: column;
    width: 64px;
    padding-left: 3px;
}
.stack.wide {
    width: 134px;
}
.stack.cuts {
    width: 91px;
}
.stack button {
    display: flex;
    align-items: center;
    gap: 5px;
    height: 26px;
    padding-bottom: 2px;
}
.rule {
    flex: none;
    width: 1px;
    margin: 1px 1px 2px;
    background-color: #bbb;
}
.under-menu {
    flex: none;
    width: 129px;
}

/* workspace */
.workspace {
    flex: 1;
    min-height: 0;
    display: grid;
    grid-template-columns: 243px 93px 1fr;
    grid-template-rows: 22px 1fr;
}
.tabs {
    grid-area: 1 / 1 / 2 / 3;
    z-index: 1;
    display: flex;
    overflow: hidden;
    background-color: #f7f7f7;
    border-bottom: 1px solid #808080;
}
.tab {
    flex: none;
    width: 56px;
    overflow: hidden;
    background-color: #d3d3d3;
    border-left: 1px solid #808080;
}
.tab.active {
    background-color: #f7f7f7;
    border-left: none;
    width: 55px;
}
.tab.last {
    width: 72px;
    padding-left: 8px;
    text-align: left;
}
.panel {
    grid-area: 2 / 1;
    min-width: 0;
    display: flex;
    flex-direction: column;
    padding: 4px 2px 2px 1px;
    border-right: 1px solid #777;
}
.grip {
    display: flex;
    align-items: center;
    justify-content: center;
    height: 16px;
    border-top: 1px solid #ccc;
    border-bottom: 1px solid #ccc;
}
.grip span {
    width: 6px;
    height: 6px;
    border: 1px solid #888;
    border-radius: 50%;
    background-color: #ccc;
}
.panel-tabs {
    display: flex;
    height: 26px;
    margin-top: 4px;
    padding-left: 1px;
    border-bottom: 1px solid #aaa;
}
.panel-tabs button {
    display: flex;
    align-items: center;
    justify-content: center;
    width: 40px;
    height: 26px;
    border: 1px solid #808080;
    border-left: none;
    background-color: #d3d3d3;
}
.panel-tabs .active {
    background-color: #f7f7f7;
    border-bottom-color: #f7f7f7;
}
.panel-tabs .more {
    flex: 1;
    padding-left: 18px;
    border: none;
    background: none;
}
.more svg {
    width: 8px;
    height: 12px;
    fill: none;
    stroke: #333;
    stroke-width: 2;
}
.filter {
    display: flex;
    align-items: center;
    height: 25px;
    margin: 1px 3px 0 4px;
    padding-left: 1px;
    border: 1px solid #c4c4c4;
}
.filter .caret {
    margin-top: 6px;
}
.tree {
    flex: 1;
    min-height: 0;
    margin: 0;
    padding: 0;
    overflow: hidden;
    list-style: none;
    font-family: "Noto Sans", "Noto Sans CJK SC", sans-serif;
    font-size: 12px;
}
.tree li {
    display: flex;
    align-items: center;
    gap: 4px;
    height: 22px;
    padding-left: 25px;
    white-space: nowrap;
}
.tree .root {
    padding-left: 3px;
    gap: 3px;
}
.tree .node {
    padding-left: 9px;
}
.node::before {
    content: "";
    width: 0;
    margin-right: 8px;
    border: 4px solid transparent;
    border-left: 4px solid #555;
    border-right: none;
}
.editing {
    color: #00f;
}
.scroll {
    flex: none;
    height: 17px;
    padding: 7px 17px;
    background-color: #efefef;
}
.scroll span {
    display: block;
    width: 93px;
    height: 2px;
    background-color: #888;
}
.viewport {
    grid-area: 1 / 2 / 3 / 4;
    position: relative;
    overflow: hidden;
    background: linear-gradient(#67a7c7 0%, #84b6cf 25%, #a2cbde 43%, #c2dce9 57%, #d4e6f0 68%, #f2f7fb 86%, #fff 96%);
}
.headsup {
    display: flex;
    justify-content: flex-end;
    padding: 5px 2px;
}
.headsup button {
    display: flex;
    justify-content: center;
    width: 26px;
}
.handle {
    position: absolute;
    left: 0;
    top: 421px;
    display: flex;
    align-items: center;
    justify-content: center;
    width: 8px;
    height: 39px;
    background-color: #f7f7f7;
    border: 1px solid #777;
    border-left: none;
}
.handle::before {
    content: "";
    width: 5px;
    height: 5px;
    border: 1px solid #888;
    border-radius: 50%;
}
.model {
    position: absolute;
    right: 0;
    top: 363px;
    width: 267px;
    height: 220px;
}
.triad {
    position: absolute;
    left: 32px;
    bottom: 42px;
    width: 50px;
    height: 60px;
    font: 9px "Noto Sans", sans-serif;
}

/* bottom */
.bottom {
    flex: none;
    height: 33px;
}
.sheet-tabs {
    display: flex;
    height: 16px;
    border-top: 1px solid #777;
    border-bottom: 1px solid #777;
    padding-left: 2px;
}
.step {
    display: flex;
    align-items: center;
    justify-content: center;
    width: 16px;
    background-color: #bbb;
    border: 1px solid #999;
}
.step svg {
    width: 10px;
    height: 10px;
    fill: #8a8a8a;
    stroke: #8a8a8a;
}
.sheet {
    padding: 0 14px 4px 7px;
    line-height: 10px;
    background-color: #d3d3d3;
    border-right: 1px solid #777;
}
.sheet.active {
    padding: 0 9px 4px 13px;
    background-color: #f7f7f7;
}

/* menus */
.menu {
    position: absolute;
    z-index: 2;
    padding: 2px;
    background-color: #f7f7f7;
    border: 1px solid #999;
    box-shadow: 3px 3px 2px rgba(0, 0, 0, 0.5);
    font-family: "Noto Sans", "Noto Sans CJK SC", sans-serif;
    font-size: 12px;
}
.menu-insert {
    left: 298px;
    top: 37px;
    width: 204px;
}
.menu-features {
    left: 496px;
    top: 85px;
    width: 249px;
}
.item {
    display: flex;
    align-items: center;
    width: 100%;
    height: 24px;
    padding: 0 0 2px 31px;
}
.item .icon:first-child {
    margin: 0 7px 0 -27px;
}
.item .icon.tip {
    margin-left: auto;
    margin-right: 2px;
}
.item .icon text {
    font: bold 9px "Noto Sans", sans-serif;
    fill: #222;
    stroke: none;
}
.item.off .icon text {
    fill: #aaa;
}
.item.hot {
    background-color: #fff;
    box-shadow: inset 0 0 0 1px #aaa;
}
.item.sub::after {
    content: "";
    margin: 0 10px 0 auto;
    border: 4px solid transparent;
    border-left: 4px solid #444;
    border-right: none;
}
.menu hr {
    margin: 5px 0 4px 31px;
    border: none;
    border-top: 1px solid #c0c0c0;
}

/* watermark and callouts */
.overlay {
    position: absolute;
    z-index: 3;
    left: 0;
    top: 0;
    pointer-events: none;
}
.watermark {
    font: 38px "Noto Sans CJK SC", sans-serif;
    fill: none;
    stroke: #7b8790;
    stroke-width: 1;
    opacity: 0.22;
}
.brand {
    font: italic 300 50px "Open Sans", sans-serif;
    fill: #7b8790;
    stroke: none;
}
.callout {
    fill: none;
    stroke: #ff4343;
    stroke-width: 5;
    stroke-linecap: round;
    filter: drop-shadow(1px 2px 2px rgba(0, 0, 0, 0.5));
}
.callout path {
    stroke-width: 10;
}
.callout .head {
    fill: #ff4343;
    stroke: none;
}
```
